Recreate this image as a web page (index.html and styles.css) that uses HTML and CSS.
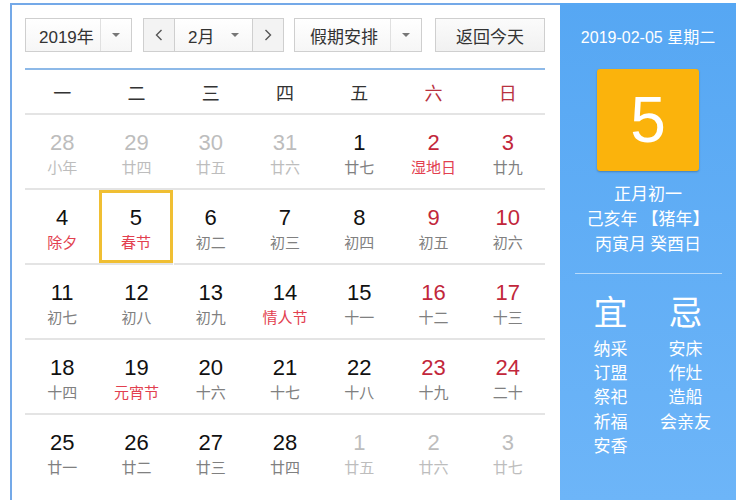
FILE: index.html
```html
<!DOCTYPE html>
<html lang="zh-CN">
<head>
<meta charset="utf-8">
<title>万年历</title>
<link rel="stylesheet" href="styles.css">
</head>
<body>
<div class="wrap">
  <div class="cal">
    <div class="controls">
      <div class="sel year"><span class="val">2019年</span><span class="arr"><i class="tri"></i></span></div>
      <div class="month-group">
        <span class="nav"><svg width="8" height="12" viewBox="0 0 8 12"><polyline points="6.5,1 1.5,6 6.5,11" fill="none" stroke="#555" stroke-width="1.4"/></svg></span>
        <span class="month"><span class="val">2月</span><i class="tri"></i></span>
        <span class="nav"><svg width="8" height="12" viewBox="0 0 8 12"><polyline points="1.5,1 6.5,6 1.5,11" fill="none" stroke="#555" stroke-width="1.4"/></svg></span>
      </div>
      <div class="sel holiday"><span class="val">假期安排</span><span class="arr"><i class="tri"></i></span></div>
      <div class="btn">返回今天</div>
    </div>
    <div class="week">
      <span>一</span><span>二</span><span>三</span><span>四</span><span>五</span><span class="we">六</span><span class="we">日</span>
    </div>
    <div class="grid">
      <div class="cell other"><b>28</b><em>小年</em></div>
      <div class="cell other"><b>29</b><em>廿四</em></div>
      <div class="cell other"><b>30</b><em>廿五</em></div>
      <div class="cell other"><b>31</b><em>廿六</em></div>
      <div class="cell"><b>1</b><em>廿七</em></div>
      <div class="cell we"><b>2</b><em class="fest">湿地日</em></div>
      <div class="cell we"><b>3</b><em>廿九</em></div>

      <div class="cell"><b>4</b><em class="fest">除夕</em></div>
      <div class="cell today"><b>5</b><em class="fest">春节</em></div>
      <div class="cell"><b>6</b><em>初二</em></div>
      <div class="cell"><b>7</b><em>初三</em></div>
      <div class="cell"><b>8</b><em>初四</em></div>
      <div class="cell we"><b>9</b><em>初五</em></div>
      <div class="cell we"><b>10</b><em>初六</em></div>

      <div class="cell"><b>11</b><em>初七</em></div>
      <div class="cell"><b>12</b><em>初八</em></div>
      <div class="cell"><b>13</b><em>初九</em></div>
      <div class="cell"><b>14</b><em class="fest">情人节</em></div>
      <div class="cell"><b>15</b><em>十一</em></div>
      <div class="cell we"><b>16</b><em>十二</em></div>
      <div class="cell we"><b>17</b><em>十三</em></div>

      <div class="cell"><b>18</b><em>十四</em></div>
      <div class="cell"><b>19</b><em class="fest">元宵节</em></div>
      <div class="cell"><b>20</b><em>十六</em></div>
      <div class="cell"><b>21</b><em>十七</em></div>
      <div class="cell"><b>22</b><em>十八</em></div>
      <div class="cell we"><b>23</b><em>十九</em></div>
      <div class="cell we"><b>24</b><em>二十</em></div>

      <div class="cell last"><b>25</b><em>廿一</em></div>
      <div class="cell last"><b>26</b><em>廿二</em></div>
      <div class="cell last"><b>27</b><em>廿三</em></div>
      <div class="cell last"><b>28</b><em>廿四</em></div>
      <div class="cell last other"><b>1</b><em>廿五</em></div>
      <div class="cell last other"><b>2</b><em>廿六</em></div>
      <div class="cell last other"><b>3</b><em>廿七</em></div>
    </div>
  </div>
  <div class="panel">
    <div class="pdate">2019-02-05 星期二</div>
    <div class="bigday">5</div>
    <div class="lunar">
      <div>正月初一</div>
      <div>己亥年 【猪年】</div>
      <div>丙寅月 癸酉日</div>
    </div>
    <div class="divider"></div>
    <div class="yiji">
      <div class="col">
        <div class="head">宜</div>
        <div>纳采</div><div>订盟</div><div>祭祀</div><div>祈福</div><div>安香</div>
      </div>
      <div class="col">
        <div class="head">忌</div>
        <div>安床</div><div>作灶</div><div>造船</div><div>会亲友</div>
      </div>
    </div>
  </div>
</div>
</body>
</html>
```

FILE: styles.css
```css
* { box-sizing: border-box; }
html, body { margin: 0; padding: 0; background: #fff; }
body {
  font-family: "Liberation Sans", "Noto Sans CJK SC", sans-serif;
  color: #1e1e1e;
  width: 750px;
  height: 500px;
  overflow: hidden;
}
.wrap {
  display: flex;
  margin: 3px 0 0 10px;
  height: 497px;
}
.cal {
  width: 550px;
  border-left: 2px solid #74a9e8;
  border-top: 2px solid #74a9e8;
  padding: 13px 15px 0 13px;
}
.controls {
  display: flex;
  height: 34px;
  font-size: 17px;
  color: #333;
}
.sel, .month-group, .btn {
  border: 1px solid #cfcfcf;
  background: linear-gradient(#ffffff, #f6f6f6);
  height: 34px;
  display: flex;
  align-items: center;
}
.year { width: 107px; }
.year .val { width: 74px; padding-left: 13px; }
.arr {
  flex: 1;
  height: 100%;
  border-left: 1px solid #e0e0e0;
  display: flex;
  align-items: center;
  justify-content: center;
}
.tri {
  display: block;
  width: 0; height: 0;
  border-left: 4px solid transparent;
  border-right: 4px solid transparent;
  border-top: 4px solid #777;
}
.month-group { width: 141px; margin-left: 11px; }
.nav {
  width: 30px;
  height: 100%;
  background: #f3f3f3;
  display: flex;
  align-items: center;
  justify-content: center;
}
.month {
  flex: 1;
  height: 100%;
  border-left: 1px solid #cfcfcf;
  border-right: 1px solid #cfcfcf;
  display: flex;
  align-items: center;
  padding: 0 13px 0 13px;
  justify-content: space-between;
}
.holiday { width: 128px; margin-left: 10px; }
.holiday .val { width: 95px; padding-left: 15px; }
.btn {
  width: 110px;
  margin-left: 13px;
  justify-content: center;
  background: linear-gradient(#fbfbfb, #f1f1f1);
}
.week {
  margin-top: 16px;
  border-top: 2px solid #8db9e8;
  border-bottom: 2px solid #e4e4e4;
  height: 47px;
  display: grid;
  grid-template-columns: repeat(7, 1fr);
  align-items: center;
  font-size: 18px;
  color: #333;
  font-family: "Noto Sans CJK SC", sans-serif;
}
.week span { text-align: center; }
.week .we { color: #b8323f; }
.grid {
  display: grid;
  grid-template-columns: repeat(7, 1fr);
}
.cell {
  height: 75px;
  border-bottom: 2px solid #e4e4e4;
  text-align: center;
  padding-top: 15px;
}
.cell.last { border-bottom: none; }
.cell b {
  display: block;
  font-weight: normal;
  font-size: 22px;
  line-height: 26px;
  color: #111;
}
.cell em {
  display: block;
  font-style: normal;
  font-size: 15px;
  line-height: 20px;
  margin-top: 1px;
  color: #808080;
  font-family: "Noto Sans CJK SC", sans-serif;
}
.cell.we b { color: #c2273b; }
.cell em.fest { color: #e2404f; }
.cell.other b, .cell.other em { color: #bdbdbd; }
.cell.today {
  box-shadow: inset 0 0 0 3px #f0bf33;
  margin-right: 1px;
}
.panel {
  width: 176px;
  height: 497px;
  background: linear-gradient(#56a7f3, #6db5f8);
  color: #fff;
  text-align: center;
  font-family: "Noto Sans CJK SC", sans-serif;
}
.pdate {
  margin-top: 25px;
  font-size: 16px;
  line-height: 20px;
  font-family: "Liberation Sans", "Noto Sans CJK SC", sans-serif;
}
.bigday {
  width: 102px;
  height: 102px;
  margin: 21px auto 0;
  background: #fbb30c;
  border-radius: 3px;
  box-shadow: 0 1px 2px rgba(0,0,0,0.25);
  font-family: "Liberation Sans", sans-serif;
  font-size: 64px;
  line-height: 102px;
}
.lunar {
  margin-top: 9px;
  font-size: 17px;
  line-height: 25px;
}
.divider {
  margin: 18px 14px 0 15px;
  height: 1px;
  background: rgba(255,255,255,0.55);
}
.yiji {
  display: flex;
  padding-left: 13px;
  margin-top: 18px;
  font-size: 17px;
  line-height: 24.2px;
}
.col { width: 75px; }
.head {
  font-size: 34px;
  line-height: 38px;
  margin-bottom: 6px;
}
```
